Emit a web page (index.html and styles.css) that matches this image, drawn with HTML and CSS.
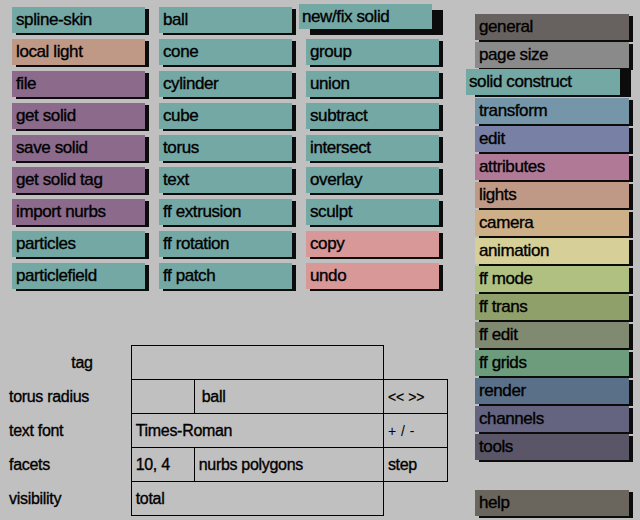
FILE: index.html
```html
<!DOCTYPE html>
<html>
<head>
<meta charset="utf-8">
<link rel="stylesheet" href="styles.css">
</head>
<body>
<div class="page">
  <div class="left">
    <div class="grid">
      <div class="btn teal">spline-skin</div>
      <div class="btn salmon">local light</div>
      <div class="btn purple">file</div>
      <div class="btn purple">get solid</div>
      <div class="btn purple">save solid</div>
      <div class="btn purple">get solid tag</div>
      <div class="btn purple">import nurbs</div>
      <div class="btn teal">particles</div>
      <div class="btn teal">particlefield</div>

      <div class="btn teal">ball</div>
      <div class="btn teal">cone</div>
      <div class="btn teal">cylinder</div>
      <div class="btn teal">cube</div>
      <div class="btn teal">torus</div>
      <div class="btn teal">text</div>
      <div class="btn teal">ff extrusion</div>
      <div class="btn teal">ff rotation</div>
      <div class="btn teal">ff patch</div>

      <div class="btn sel-grid"><span class="face teal">new/fix solid</span></div>
      <div class="btn teal">group</div>
      <div class="btn teal">union</div>
      <div class="btn teal">subtract</div>
      <div class="btn teal">intersect</div>
      <div class="btn teal">overlay</div>
      <div class="btn teal">sculpt</div>
      <div class="btn pink">copy</div>
      <div class="btn pink">undo</div>
    </div>

    <table class="props">
      <colgroup>
        <col class="c-lbl"><col class="c-a"><col class="c-b"><col class="c-c">
      </colgroup>
      <tr>
        <td class="lbl tag">tag</td>
        <td class="box" colspan="2"></td>
        <td></td>
      </tr>
      <tr>
        <td class="lbl">torus radius</td>
        <td class="box"></td>
        <td class="box ball">ball</td>
        <td class="box small">&lt;&lt; &gt;&gt;</td>
      </tr>
      <tr>
        <td class="lbl">text font</td>
        <td class="box" colspan="2">Times-Roman</td>
        <td class="box small thin">+ / -</td>
      </tr>
      <tr>
        <td class="lbl">facets</td>
        <td class="box">10, 4</td>
        <td class="box">nurbs polygons</td>
        <td class="box">step</td>
      </tr>
      <tr>
        <td class="lbl">visibility</td>
        <td class="box" colspan="2">total</td>
        <td></td>
      </tr>
    </table>
  </div>

  <div class="side">
    <div class="btn sbtn general">general</div>
    <div class="btn sbtn pagesize">page size</div>
    <div class="btn sbtn sel-side"><span class="face teal">solid construct</span></div>
    <div class="btn sbtn transform">transform</div>
    <div class="btn sbtn edit">edit</div>
    <div class="btn sbtn attributes">attributes</div>
    <div class="btn sbtn lights">lights</div>
    <div class="btn sbtn camera">camera</div>
    <div class="btn sbtn animation">animation</div>
    <div class="btn sbtn ffmode">ff mode</div>
    <div class="btn sbtn fftrans">ff trans</div>
    <div class="btn sbtn ffedit">ff edit</div>
    <div class="btn sbtn ffgrids">ff grids</div>
    <div class="btn sbtn render">render</div>
    <div class="btn sbtn channels">channels</div>
    <div class="btn sbtn tools">tools</div>
    <div class="btn sbtn help">help</div>
  </div>
</div>
</body>
</html>
```

FILE: styles.css
```css
html, body {
  margin: 0;
  padding: 0;
  background: #c0c0c0;
}

body {
  font-family: "Liberation Sans", Arial, sans-serif;
  color: #000;
  width: 640px;
  height: 520px;
  overflow: hidden;
  -webkit-text-stroke: 0.35px #000;
}

.page {
  display: flex;
  align-items: flex-start;
}

.left {
  width: 475px;
  flex: none;
}

.grid {
  display: grid;
  grid-template-rows: repeat(9, 26px);
  grid-auto-flow: column;
  grid-auto-columns: 133px;
  column-gap: 14px;
  row-gap: 6px;
  padding: 7px 0 0 12px;
}

.btn {
  height: 26px;
  line-height: 26px;
  font-size: 17px;
  letter-spacing: -0.4px;
  padding-left: 4px;
  box-sizing: border-box;
  box-shadow: 4px 2px 0 #0c0c0c;
  white-space: nowrap;
}

.teal { background: #73a8a5; }
.salmon { background: #c09886; }
.purple { background: #8b6a8c; }
.pink { background: #d89898; }

/* selected (pressed-out) buttons */
.sel-grid,
.sel-side {
  position: relative;
  background: transparent;
  box-shadow: none;
  padding-left: 0;
}

.sel-grid::before,
.sel-side::before {
  content: "";
  position: absolute;
  background: #0c0c0c;
}

.sel-grid::before {
  left: 4px;
  top: 3px;
  width: 133px;
  height: 25px;
}

.sel-side::before {
  left: 0;
  top: -1px;
  width: 156px;
  height: 28px;
}

.face {
  position: relative;
  z-index: 1;
  display: block;
  box-sizing: border-box;
  padding-left: 3px;
}

.sel-grid .face {
  width: 133px;
  height: 25px;
  line-height: 25px;
  margin-left: -7px;
  margin-top: -3px;
}

.sel-side .face {
  width: 154px;
  height: 26px;
  margin-left: -9px;
  margin-top: -1px;
}

/* side column */
.side {
  display: flex;
  flex-direction: column;
  gap: 2px;
  padding-top: 14px;
  width: 154px;
  flex: none;
}

.sbtn { width: 154px; }

.general { background: #67625f; }
.pagesize { background: #8a8a8a; }
.transform { background: #7496a8; }
.edit { background: #7880a6; }
.attributes { background: #b07a96; }
.lights { background: #c09886; }
.camera { background: #cdb088; }
.animation { background: #d6d098; }
.ffmode { background: #b0c080; }
.fftrans { background: #90a06a; }
.ffedit { background: #808a70; }
.ffgrids { background: #6c9c7c; }
.render { background: #5a7088; }
.channels { background: #646480; }
.tools { background: #5a5668; }
.help { background: #6a665e; margin-top: 28px; }

/* properties table */
.props {
  margin-top: 56px;
  border-collapse: collapse;
  table-layout: fixed;
  width: 448px;
  font-size: 16px;
  letter-spacing: -0.3px;
}

.c-lbl { width: 131px; }
.c-a { width: 63px; }
.c-b { width: 189px; }
.c-c { width: 64px; }

.props tr { height: 34px; }

.props td {
  padding: 0 0 0 4px;
  white-space: nowrap;
  vertical-align: middle;
}

.props td.lbl {
  padding-left: 9px;
}

.props td.tag {
  text-align: right;
  padding-right: 38px;
}

.props td.box {
  border: 1px solid #000;
}

.props td.ball {
  padding-left: 7px;
}

.props td.small {
  font-size: 14px;
  letter-spacing: 0;
  -webkit-text-stroke: 0.2px #000;
}

.props td.thin {
  word-spacing: 1px;
  -webkit-text-stroke: 0;
}
```
